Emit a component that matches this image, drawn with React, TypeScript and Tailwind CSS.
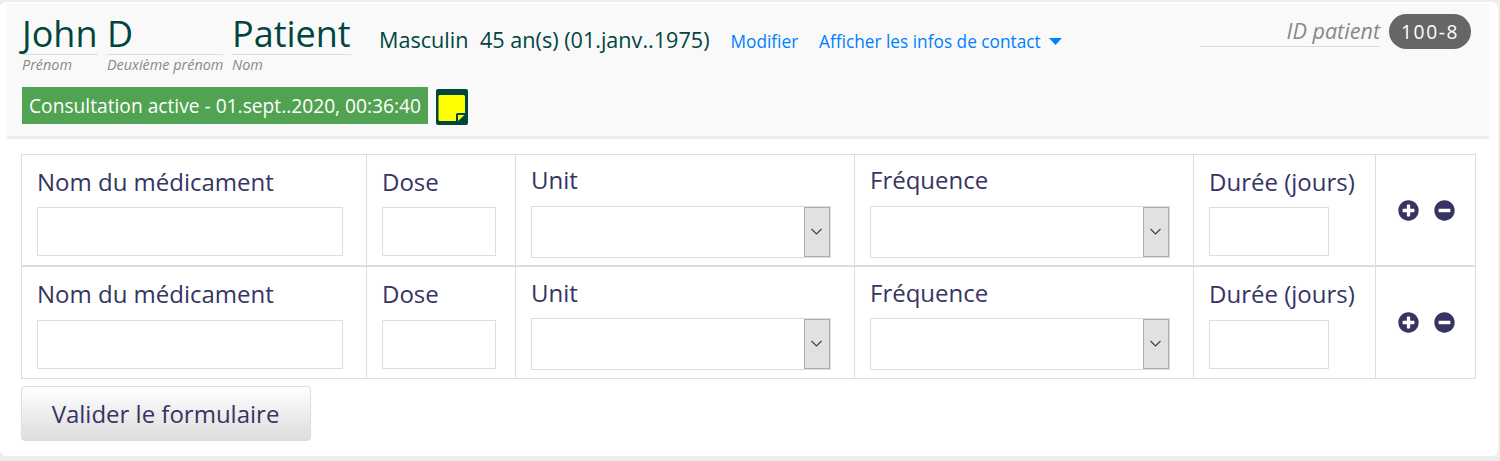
import React, { useState } from "react";
import { FaMinusCircle, FaPlusCircle } from "react-icons/fa";

interface NameFieldProps {
  value: string;
  label: string;
  className: string;
}

const NameField: React.FC<NameFieldProps> = ({ value, label, className }) => (
  <div className={className}>
    <div className="h-[43px] border-b border-[#ddd] text-[36px] leading-[44px] text-[#00463f] whitespace-nowrap">
      {value}
    </div>
    <em className="block mt-px text-[14.4px] leading-[18px] text-[#888] whitespace-nowrap">
      {label}
    </em>
  </div>
);

const NoteIcon = () => (
  <svg className="ml-2 mt-[2px] w-8 h-9" viewBox="0 0 32 36">
    <rect width="32" height="36" rx="2" fill="#00463f" />
    <path
      d="M3.500 6h24q1.500 0 1.500 1.500V24h-7.500q-1.500 0-1.500 1.500V32H4q-1.500 0-1.500-1.500v-23Q2.500 6 3.500 6z"
      fill="#ff0"
    />
    <path d="M22 26h6.500L22 32z" fill="#ff0" />
  </svg>
);

interface FieldProps {
  label: string;
  cell: string;
  input: string;
}

const TextField: React.FC<FieldProps> = ({ label, cell, input }) => (
  <div className={`border-l border-[#ddd] pl-[15px] pt-[11px] ${cell}`}>
    <label className="block h-8 text-[24px] leading-8 whitespace-nowrap">
      {label}
    </label>
    <input
      type="text"
      className={`block h-[49px] border border-[#ddd] bg-white outline-none ${input}`}
    />
  </div>
);

const SelectField: React.FC<{ label: string; labelClass: string }> = ({
  label,
  labelClass,
}) => (
  <div className="w-[339px] border-l border-[#ddd] pl-[15px]">
    <label className={`block text-[24px] leading-8 ${labelClass}`}>
      {label}
    </label>
    <button className="flex justify-end w-[300px] h-[52px] border border-[#ddd] bg-white">
      <span className="flex items-center justify-center w-[26px] h-[50px] border border-[#adadad] bg-[#e1e1e1] pr-px pb-px">
        <svg className="w-[11px] h-[7px]" viewBox="0 0 11 7" fill="none">
          <path d="M0.500 1l5 5 5-5" stroke="#444" strokeWidth="1.2" />
        </svg>
      </span>
    </button>
  </div>
);

interface RowProps {
  first: boolean;
  onAdd: () => void;
  onRemove: () => void;
}

const DrugRow: React.FC<RowProps> = ({ first, onAdd, onRemove }) => {
  const gap = first ? "mt-[9px]" : "mt-[10px]";
  const selectLabel = first ? "pt-[9px] h-[51px]" : "pt-[10px] h-[51px]";

  return (
    <div
      className={`flex w-[1455px] border-y border-r border-[#ddd] ${
        first ? "h-[112px]" : "h-[113px]"
      }`}
    >
      <TextField
        label="Nom du médicament"
        cell="w-[345px]"
        input={`w-[306px] ${gap}`}
      />
      <TextField label="Dose" cell="w-[149px]" input={`w-[114px] ${gap}`} />
      <SelectField label="Unit" labelClass={selectLabel} />
      <SelectField label="Fréquence" labelClass={selectLabel} />
      <TextField
        label="Durée (jours)"
        cell="w-[182px]"
        input={`w-[120px] ${gap}`}
      />
      <div className="flex flex-1 items-start gap-[15px] border-l border-[#ddd] pl-[22px] pt-[45px] text-[21px]">
        <button onClick={onAdd}>
          <FaPlusCircle />
        </button>
        <button onClick={onRemove}>
          <FaMinusCircle />
        </button>
      </div>
    </div>
  );
};

const App: React.FC = () => {
  const [rows, setRows] = useState([1, 2]);

  const addRow = () => setRows([...rows, Math.max(...rows) + 1]);
  const removeRow = (id: number) => {
    if (rows.length > 1) setRows(rows.filter((row) => row !== id));
  };

  return (
    <div className="min-h-screen bg-[#eee] pt-[2px] font-['Open_Sans',sans-serif] text-[#363463]">
      <div className="w-[1498px] h-[454px] rounded-[6px] bg-white pt-[2px] pl-[7px]">
        <header className="w-[1482px] h-[135px] border-b-[3px] border-[#eee] bg-[#f9f9f9] pl-[15px]">
          <div className="flex h-[83px] items-start">
            <div className="flex pt-2">
              <NameField value="John" label="Prénom" className="w-[76px]" />
              <NameField
                value="D"
                label="Deuxième prénom"
                className="w-[116px] ml-[9px]"
              />
              <NameField
                value="Patient"
                label="Nom"
                className="w-[119px] ml-[9px]"
              />
            </div>
            <div className="flex items-baseline pt-[20px] pl-[28px] leading-8 whitespace-nowrap">
              <span className="w-[101px] text-[21.6px] text-[#00463f]">
                Masculin
              </span>
              <span className="w-[250.5px] text-[21.6px] text-[#00463f]">
                45 an(s) (01.janv..1975)
              </span>
              <a className="w-[88.5px] text-[17.28px] text-[#007fff]">
                Modifier
              </a>
              <a className="text-[17.28px] text-[#007fff]">
                Afficher les infos de contact
              </a>
              <svg
                className="ml-[8px] w-[13px] h-[7px] self-center"
                viewBox="0 0 13 7"
              >
                <path d="M0 0h13L6.500 7z" fill="#007fff" />
              </svg>
            </div>
            <div className="flex ml-auto mr-[18px] pt-[10px]">
              <em className="w-[180px] h-[33px] border-b border-[#ddd] text-right text-[21.6px] leading-[33px] text-[#888]">
                ID patient
              </em>
              <span className="ml-[9px] w-[82px] h-[35px] rounded-full bg-[#666] pl-[12px] text-[19.2px] leading-[36px] tracking-[1.6px] text-white">
                100-8
              </span>
            </div>
          </div>
          <div className="flex">
            <div className="w-[406px] h-[37px] bg-[#51a351] pl-[7px] text-[19.2px] leading-[37px] text-white whitespace-nowrap">
              Consultation active - 01.sept..2020, 00:36:40
            </div>
            <NoteIcon />
          </div>
        </header>
        <form
          className="pl-[14px] pt-[15px]"
          onSubmit={(e) => e.preventDefault()}
        >
          {rows.map((id, index) => (
            <DrugRow
              key={id}
              first={index === 0}
              onAdd={addRow}
              onRemove={() => removeRow(id)}
            />
          ))}
          <button className="block mt-[7px] w-[290px] h-[55px] rounded-[4px] border border-[#ddd] bg-linear-to-b from-white to-[#ddd] pr-px text-[24px] leading-[53px]">
            Valider le formulaire
          </button>
        </form>
      </div>
    </div>
  );
};

export default App;
